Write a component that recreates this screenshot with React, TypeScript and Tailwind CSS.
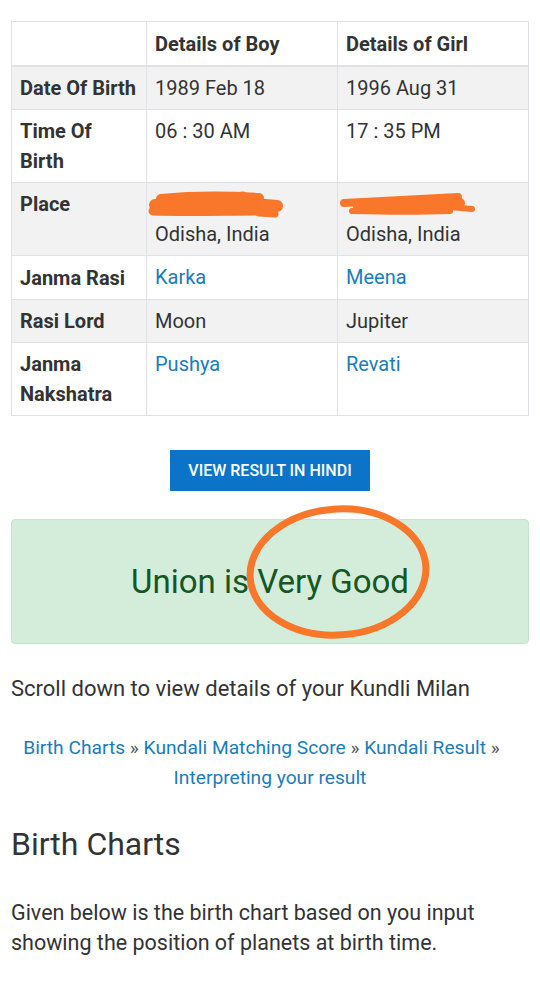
import React from "react";

const link = "text-[#1c7cba]";

const rows: { label: string; boy: React.ReactNode; girl: React.ReactNode; shade?: boolean }[] = [
  { label: "Date Of Birth", boy: "1989 Feb 18", girl: "1996 Aug 31", shade: true },
  { label: "Time Of Birth", boy: "06 : 30 AM", girl: "17 : 35 PM" },
  {
    label: "Place",
    boy: <PlaceCell />,
    girl: <PlaceCell girl />,
    shade: true,
  },
  { label: "Janma Rasi", boy: <span className={link}>Karka</span>, girl: <span className={link}>Meena</span> },
  { label: "Rasi Lord", boy: "Moon", girl: "Jupiter", shade: true },
  { label: "Janma Nakshatra", boy: <span className={link}>Pushya</span>, girl: <span className={link}>Revati</span> },
];

function PlaceCell({ girl }: { girl?: boolean }) {
  return (
    <div className="relative">
      <div className="text-[#999]">&nbsp;</div>
      <div>Odisha, India</div>
      {/* hand-drawn scribble hiding the place name */}
      <svg className="absolute -left-[8px] top-0" width="150" height="34" viewBox="0 0 150 34">
        {girl ? (
          <g stroke="#f8772a" strokeLinecap="round" strokeLinejoin="round" fill="none">
            <path d="M6 14 C40 12 80 10 120 8" strokeWidth="8" />
            <path d="M20 18 C60 17 95 16 122 14" strokeWidth="10" />
            <path d="M14 22 C50 23 85 23 112 22" strokeWidth="6" />
            <path d="M100 17 L134 20" strokeWidth="6" />
          </g>
        ) : (
          <g stroke="#f8772a" strokeLinecap="round" strokeLinejoin="round" fill="none">
            <path d="M14 10 C45 7 80 7 112 9" strokeWidth="10" />
            <path d="M8 16 C40 14 90 14 130 17" strokeWidth="12" />
            <path d="M6 22 C40 23 80 22 115 22" strokeWidth="9" />
            <path d="M112 24 L128 25" strokeWidth="7" />
            <path d="M78 8 L96 6" strokeWidth="7" />
          </g>
        )}
      </svg>
    </div>
  );
}

export default function App() {
  return (
    <div className="w-[540px] bg-white text-[#333] font-['Roboto',sans-serif]">
      <div className="pt-[21px] px-[11px]">
        <table className="w-full table-fixed border-collapse text-[20px] leading-[30px]">
          <colgroup>
            <col className="w-[135px]" />
            <col className="w-[191px]" />
            <col />
          </colgroup>
          <thead>
            <tr>
              <th className="border border-[#dee2e6] border-b-2 px-2 pt-[7px] pb-[6px]" />
              <th className="border border-[#dee2e6] border-b-2 px-2 pt-[7px] pb-[6px] text-left font-bold">Details of Boy</th>
              <th className="border border-[#dee2e6] border-b-2 px-2 pt-[7px] pb-[6px] text-left font-bold">Details of Girl</th>
            </tr>
          </thead>
          <tbody>
            {rows.map((r, i) => (
              <tr key={r.label} className={r.shade ? "bg-[#f2f2f2]" : "bg-white"}>
                <td className={`border border-[#dee2e6] px-2 align-top font-bold ${i === 3 ? "pt-[7px] pb-[6px]" : "py-[6px]"}`}>{r.label}</td>
                <td className="border border-[#dee2e6] px-2 py-[6px] align-top">{r.boy}</td>
                <td className="border border-[#dee2e6] px-2 py-[6px] align-top">{r.girl}</td>
              </tr>
            ))}
          </tbody>
        </table>

        <div className="flex justify-center mt-[34px]">
          <button className="w-[200px] h-[41px] bg-[#0b74c9] text-white text-[16px] font-medium uppercase">
            View Result in Hindi
          </button>
        </div>

        <div className="relative mt-[28px] h-[125px] rounded border border-[#c3e6cb] bg-[#d4edda] flex items-center justify-center">
          <span className="text-[33px] text-[#155724]">Union is Very Good</span>
          <svg className="absolute left-[228px] top-[-19px]" width="196" height="142" viewBox="0 0 196 142">
            <ellipse cx="98" cy="71" rx="88" ry="63" fill="none" stroke="#f8772a" strokeWidth="7" transform="rotate(-4 98 71)" />
          </svg>
        </div>

        <p className="mt-[30px] text-[22px] leading-[30px]">Scroll down to view details of your Kundli Milan</p>

        <p className="mt-[29px] text-center text-[19.2px] leading-[30px] text-[#555]">
          <span className={link}>Birth Charts</span> » <span className={link}>Kundali Matching Score</span> »{" "}
          <span className={link}>Kundali Result</span> <span className="pr-[17px]">»</span>{" "}
          <span className={link}>Interpreting your result</span>
        </p>

        <h2 className="mt-[31px] text-[32px] leading-[40px]">Birth Charts</h2>

        <p className="mt-[34px] text-[21.5px] leading-[30px]">
          Given below is the birth chart based on you input showing the position of planets at birth time.
        </p>
      </div>
    </div>
  );
}
